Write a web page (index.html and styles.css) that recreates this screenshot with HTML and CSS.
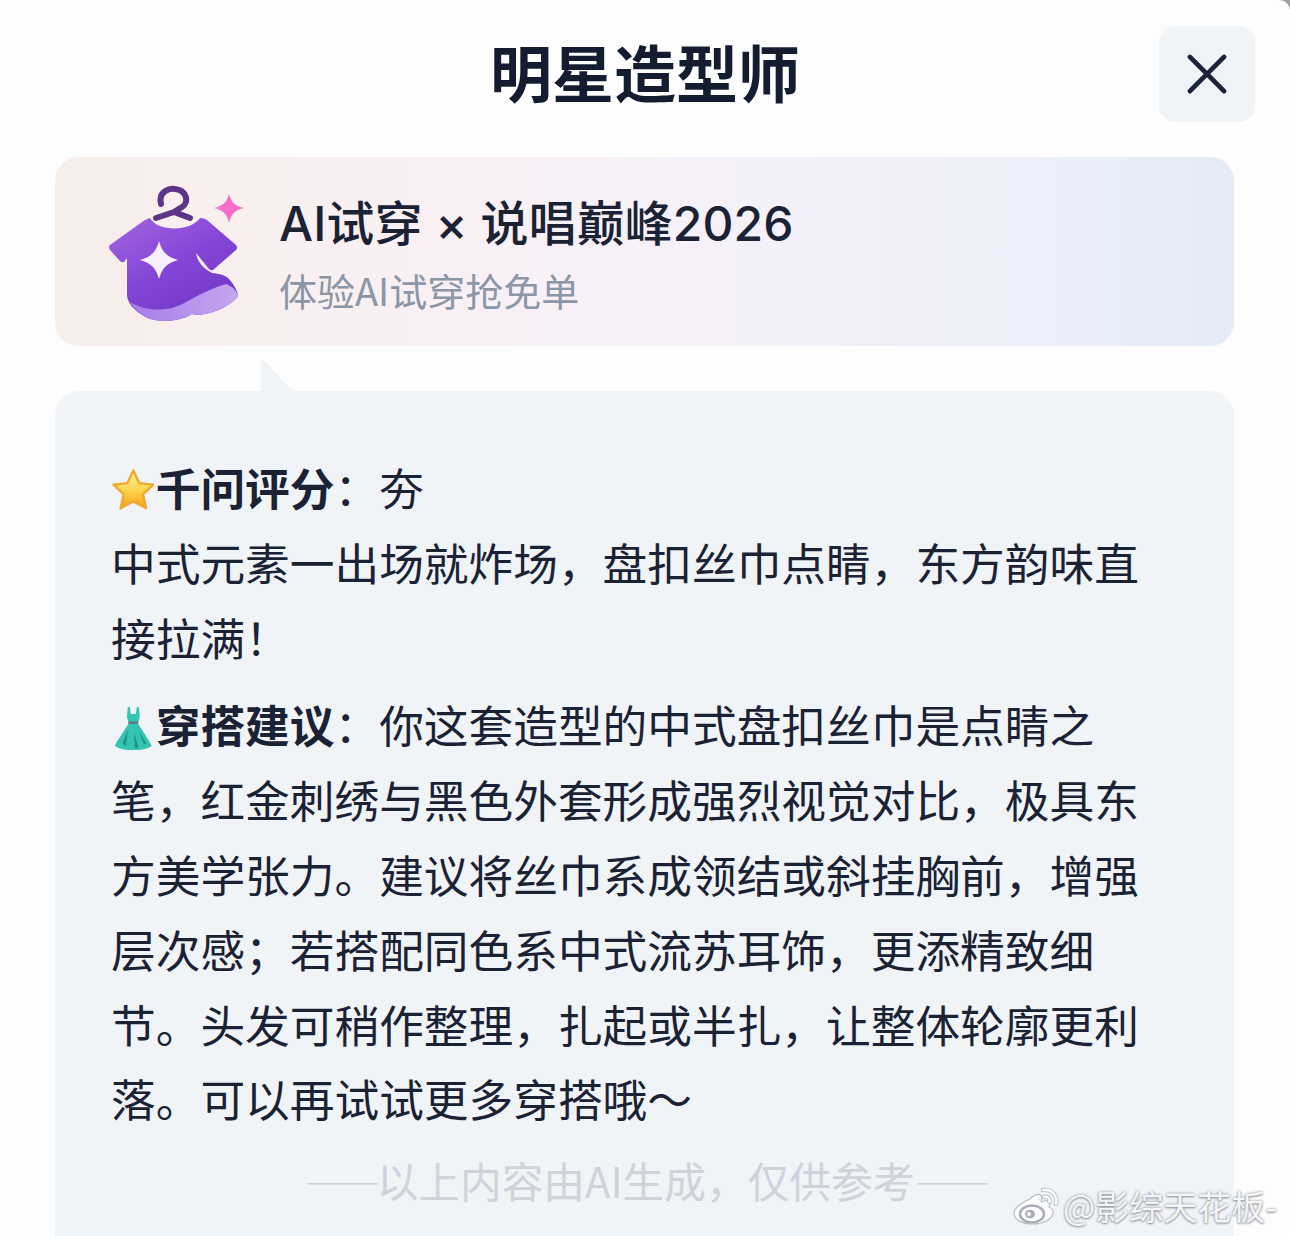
FILE: index.html
```html
<!DOCTYPE html>
<html lang="zh-CN">
<head>
<meta charset="utf-8">
<title>明星造型师</title>
<link rel="stylesheet" href="styles.css">
</head>
<body>
<div class="sheet">
  <header class="header">
    <h1 class="title">明星造型师</h1>
    <button class="close" aria-label="关闭">
      <svg class="close-icon" viewBox="0 0 40 40"><path d="M2 2 L38 38 M38 2 L2 38"/></svg>
    </button>
  </header>

  <section class="banner">
    <svg class="shirt" viewBox="105 185 140 140">
      <defs>
        <linearGradient id="shirtFill" x1="0.1" y1="0" x2="0.8" y2="1">
          <stop offset="0" stop-color="#a062e0"/>
          <stop offset="0.5" stop-color="#8445d6"/>
          <stop offset="1" stop-color="#6f36c4"/>
        </linearGradient>
        <linearGradient id="hemFill" x1="0" y1="0" x2="1" y2="0">
          <stop offset="0" stop-color="#a77de6"/>
          <stop offset="1" stop-color="#c5a6f0"/>
        </linearGradient>
      </defs>
      <path class="hanger" d="M161 204 C158 191 170 188 175 189 C186 190 190 202 182 207 L174 212 L156 218 M174 212 L190 218"/>
      <path fill="url(#shirtFill)" d="M150 218 C158 232 190 232 200 218 Q204 218 207 220 L236 245 Q238 248 236 250 L213 270 Q211 271 209 269 L196 253 Q198 266 212 273 Q224 274 228 278 C234 284 238 292 238 296 C232 306 205 318 192 314 C180 322 160 322 150 319 C138 314 128 305 127 296 L127 258 L124 262 Q122 263 120 261 L110 250 Q108 247 110 245 L142 222 Q146 219 150 218 Z"/>
      <path fill="url(#hemFill)" d="M130 302 C146 312 170 312 186 302 C204 292 218 286 226 284 C232 286 238 292 238 296 C232 306 205 318 192 314 C180 322 160 322 150 319 C142 316 134 309 130 302 Z"/>
      <path fill="#f6f0fd" d="M159 241 C162 252 167 257 178 260 C167 263 162 268 159 279 C156 268 151 263 140 260 C151 257 156 252 159 241 Z"/>
      <path fill="#f56fc8" d="M229 194 C231 202 235 206 244 208 C235 210 231 214 229 223 C227 214 223 210 214 208 C223 206 227 202 229 194 Z"/>
    </svg>
    <div class="banner-text">
      <div class="banner-title">AI试穿 × 说唱巅峰2026</div>
      <div class="banner-sub">体验AI试穿抢免单</div>
    </div>
  </section>

  <section class="bubble">
    <p class="para"><svg class="emoji" viewBox="0 0 45 45"><defs><linearGradient id="starFill" x1="0" y1="0" x2="0" y2="1"><stop offset="0" stop-color="#fff2a0"/><stop offset="0.55" stop-color="#fdd34a"/><stop offset="1" stop-color="#f4a01e"/></linearGradient></defs><path fill="url(#starFill)" stroke="#efa92e" stroke-width="2.4" stroke-linejoin="round" d="M22.5 2.5 L28.4 15.2 L42.5 16.8 L32.2 26.6 L35.4 40.5 L22.5 33.8 L9.6 40.5 L12.8 26.6 L2.5 16.8 L16.6 15.2 Z"/></svg><strong class="label">千问评分</strong>：夯<br>中式元素一出场就炸场，盘扣丝巾点睛，东方韵味直接拉满！</p>
    <p class="para"><svg class="emoji" viewBox="0 0 45 45"><path fill="#33c4b2" d="M17 1 L19 1 L20 8 L25 8 L26 1 L28 1 L29 11 L27 17 C32 26 38 33 41 40 C36 46 9 46 4 40 C7 33 13 26 18 17 L16 11 Z"/><path fill="#1c9488" d="M12 37 L17 24 L15 41 Z M24 42 L23 26 L28 42 Z M33 38 L28 25 L36 38 Z"/><rect x="17.5" y="15.5" width="10" height="2.5" fill="#5d7f82"/></svg><strong class="label">穿搭建议</strong>：你这套造型的中式盘扣丝巾是点睛之笔，红金刺绣与黑色外套形成强烈视觉对比，极具东方美学张力。建议将丝巾系成领结或斜挂胸前，增强层次感；若搭配同色系中式流苏耳饰，更添精致细节。头发可稍作整理，扎起或半扎，让整体轮廓更利落。可以再试试更多穿搭哦～</p>
    <p class="disclaimer"><span class="dash">——</span>以上内容由AI生成，仅供参考<span class="dash dash-end">——</span></p>
  </section>

  <div class="watermark">
    <svg class="weibo" viewBox="0 0 46 38">
      <path fill="#fcfcfd" stroke="#b9bdc4" stroke-width="1.2" stroke-linejoin="round" d="M17 12 C23 6 29 6 29 11 C29 13 27 15 29 15 C35 12 38 15 36 20 C39 21 41 24 40 27 C38 33 30 37 20 37 C9 37 1 33 1 26 C1 21 9 15 17 12 Z"/>
      <ellipse cx="19" cy="27" rx="12" ry="8.5" fill="#fcfcfd" stroke="#a9adb5" stroke-width="2.4"/>
      <ellipse cx="17" cy="27" rx="5" ry="4.2" fill="#a9adb5"/>
      <circle cx="16" cy="27" r="2" fill="#fcfcfd"/>
      <path fill="none" stroke="#b9bdc4" stroke-width="4.4" stroke-linecap="round" d="M30 3 C39 2 45 9 43 17 M31 10 C35 9 37 11 36.5 15"/>
      <path fill="none" stroke="#fcfcfd" stroke-width="2.6" stroke-linecap="round" d="M30 3 C39 2 45 9 43 17 M31 10 C35 9 37 11 36.5 15"/>
    </svg>
    <span class="wm-text">@影综天花板-</span>
  </div>
</div>
</body>
</html>
```
FILE: styles.css
```css
* { box-sizing: border-box; }

html, body {
  margin: 0;
  padding: 0;
  height: 1236px;
  overflow: hidden;
  background: #a0a0a0;
}

.sheet {
  position: relative;
  width: 1290px;
  height: 1236px;
  overflow: hidden;
  background: #fdfdfe;
  border-radius: 0 11px 0 0;
  font-family: "Noto Sans CJK SC", "Noto Sans", sans-serif;
  color: #1a2234;
}

.header {
  display: grid;
  grid-template-columns: 96px 1fr 96px;
  align-items: center;
  padding: 26px 35px 35px;
}

.title {
  grid-column: 2;
  margin: 0 0 6px;
  text-align: center;
  font-size: 62px;
  line-height: 90px;
  font-weight: 700;
  color: #141c30;
}

.close {
  grid-column: 3;
  display: flex;
  align-items: center;
  justify-content: center;
  width: 96px;
  height: 96px;
  padding: 0;
  border: 0;
  border-radius: 16px;
  background: #f1f4f7;
}

.close-icon {
  width: 38px;
  height: 38px;
  fill: none;
  stroke: #1b2338;
  stroke-width: 5;
  stroke-linecap: round;
  overflow: visible;
}

.banner {
  display: flex;
  align-items: center;
  gap: 34px;
  height: 189px;
  margin: 0 56px 0 55px;
  padding: 7px 0 0 50px;
  border-radius: 24px;
  background: linear-gradient(90deg, #f7eeeb 0%, #f9f0f3 30%, #f6f1f9 55%, #ebeff9 85%, #e3ebf7 100%);
}

.shirt {
  flex: none;
  width: 140px;
  height: 140px;
}

.hanger {
  fill: none;
  stroke: #5e3489;
  stroke-width: 6;
  stroke-linecap: round;
  stroke-linejoin: round;
}

.banner-title {
  margin-top: 2px;
  margin-bottom: 1px;
  font-family: Inter, "Noto Sans CJK SC", sans-serif;
  font-size: 48px;
  line-height: 65px;
  font-weight: 500;
  color: #1a2234;
  letter-spacing: 0.1px;
}

.banner-sub {
  font-size: 38px;
  line-height: 65px;
  color: #8b96a6;
}

.bubble {
  position: relative;
  height: 845px;
  margin: 45px 56px 0 55px;
  padding: 59px 90px 0 56px;
  border-radius: 24px 24px 0 0;
  background: #f1f4f7;
}

.bubble::before {
  content: "";
  position: absolute;
  left: 206px;
  top: -31px;
  width: 32px;
  height: 31px;
  background: #f1f4f7;
  clip-path: polygon(0 100%, 0 8%, 8% 0, 100% 100%);
}

.para {
  margin: 0 0 13px;
  font-size: 44.7px;
  line-height: 74.8px;
  color: #1a2234;
}

.emoji {
  width: 44.7px;
  height: 44.7px;
  vertical-align: -7px;
}

.label {
  font-weight: 700;
}

.disclaimer {
  margin: 0 -90px 0 -56px;
  text-align: center;
  font-size: 41.7px;
  line-height: 62px;
  color: #cfd3dc;
}

.dash {
  letter-spacing: -4px;
  font-size: 38px;
}

.dash-end {
  margin-right: -2px;
}

.watermark {
  position: absolute;
  left: 1013px;
  top: 1184px;
  display: flex;
  align-items: center;
  gap: 4px;
}

.weibo {
  width: 46px;
  height: 38px;
}

.wm-text {
  font-size: 34px;
  line-height: 44px;
  color: #f4f5f7;
  text-shadow: 0 0 3px #8f949b, 0 1px 2px #9a9ea5;
  white-space: nowrap;
}
```
